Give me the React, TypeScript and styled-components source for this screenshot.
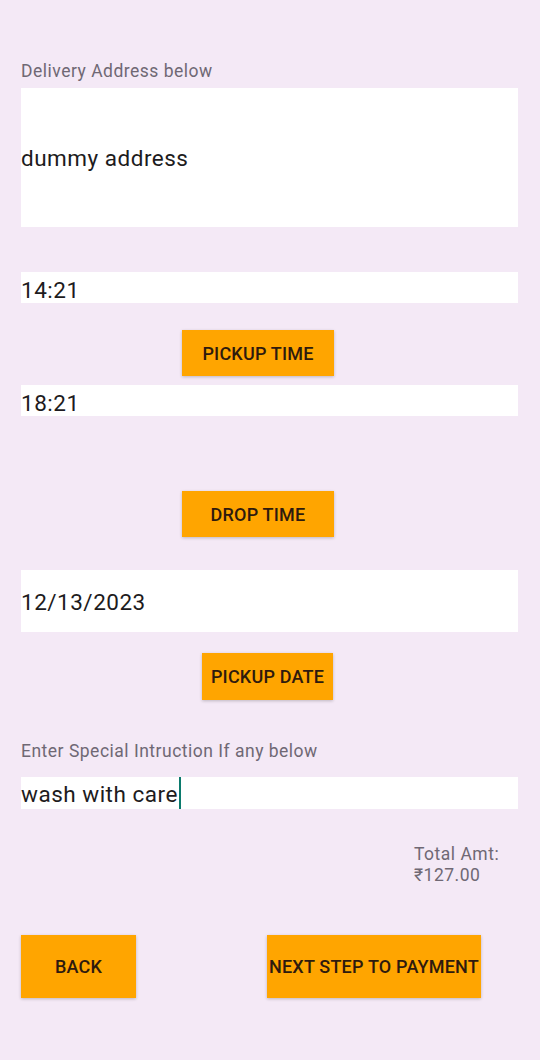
import React from "react";
import styled, { createGlobalStyle } from "styled-components";

const Global = createGlobalStyle`
  html, body { margin: 0; padding: 0; background: #f4e9f6; }
  body { font-family: Roboto, "Noto Sans", Arial, sans-serif; }
  * { box-sizing: border-box; }
`;

const Page = styled.div`
  width: 540px;
  min-height: 1060px;
  background: #f4e9f6;
  padding: 62px 22px 0 21px;
  display: flex;
  flex-direction: column;
`;

const Label = styled.div<{ $mb: number }>`
  font-size: 17.5px;
  line-height: 19px;
  letter-spacing: 0.5px;
  color: #6f6874;
  margin-bottom: ${(p) => p.$mb}px;
`;

const Field = styled.div<{ $h: number; $pt: number; $mb: number }>`
  height: ${(p) => p.$h}px;
  background: #ffffff;
  padding-top: ${(p) => p.$pt}px;
  margin-bottom: ${(p) => p.$mb}px;
  font-size: 22.5px;
  line-height: 24px;
  letter-spacing: 0.5px;
  color: #1d1b20;
  white-space: nowrap;
  display: flex;
  align-items: flex-start;
`;

const Cursor = styled.span`
  display: inline-block;
  width: 2.5px;
  height: 32px;
  margin-top: -5px;
  margin-left: 1px;
  background: #0b7a6d;
`;

const ButtonRow = styled.div<{ $mb: number; $indent: number }>`
  display: flex;
  justify-content: flex-start;
  padding-left: ${(p) => p.$indent}px;
  margin-bottom: ${(p) => p.$mb}px;
`;

const Button = styled.button<{ $w: number; $h: number }>`
  width: ${(p) => p.$w}px;
  height: ${(p) => p.$h}px;
  border: none;
  border-radius: 0;
  background: #ffa500;
  color: #2e1a0e;
  font-family: Roboto, "Noto Sans", Arial, sans-serif;
  font-weight: 500;
  font-size: 18px;
  letter-spacing: 0.2px;
  text-transform: uppercase;
  padding: 0;
  white-space: nowrap;
  box-shadow: 0 1px 3px rgba(0, 0, 0, 0.22);
  display: flex;
  align-items: center;
  justify-content: center;
`;

const Total = styled.div`
  margin-left: 393px;
  font-size: 17.5px;
  line-height: 21px;
  letter-spacing: 0.5px;
  color: #6f6874;
  margin-bottom: 49px;
`;

const BottomRow = styled.div`
  display: flex;
  justify-content: space-between;
  padding-right: 37px;
`;

export default function App() {
  return (
    <>
      <Global />
      <Page>
        <Label $mb={7}>Delivery Address below</Label>
        <Field $h={139} $pt={58} $mb={45}>dummy address</Field>
        <Field $h={31} $pt={6} $mb={27}>14:21</Field>
        <ButtonRow $mb={9} $indent={161}>
          <Button $w={152} $h={46}>Pickup Time</Button>
        </ButtonRow>
        <Field $h={31} $pt={6} $mb={75}>18:21</Field>
        <ButtonRow $mb={33} $indent={161}>
          <Button $w={152} $h={46}>Drop Time</Button>
        </ButtonRow>
        <Field $h={62} $pt={20} $mb={21}>12/13/2023</Field>
        <ButtonRow $mb={42} $indent={181}>
          <Button $w={131} $h={47}>Pickup Date</Button>
        </ButtonRow>
        <Label $mb={16}>Enter Special Intruction If any below</Label>
        <Field $h={32} $pt={5} $mb={35}>
          wash with care
          <Cursor />
        </Field>
        <Total>
          Total Amt:
          <br />
          ₹127.00
        </Total>
        <BottomRow>
          <Button $w={115} $h={63}>Back</Button>
          <Button $w={214} $h={63}>Next Step to Payment</Button>
        </BottomRow>
      </Page>
    </>
  );
}
